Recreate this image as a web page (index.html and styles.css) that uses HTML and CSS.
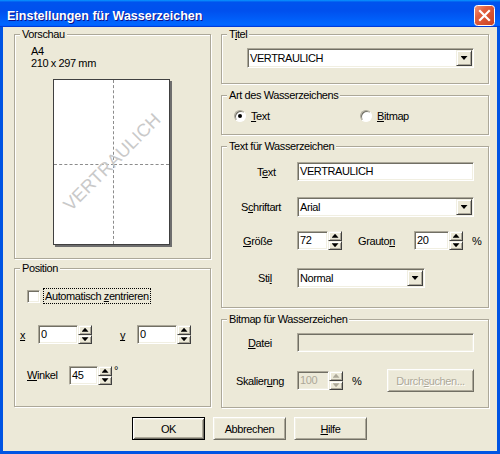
FILE: index.html
```html
<!DOCTYPE html>
<html lang="de">
<head>
    <meta charset="UTF-8">
    <title>Einstellungen für Wasserzeichen</title>
    <link rel="stylesheet" href="styles.css">
</head>
<body>

<div class="window">
    <div class="titlebar">
        <span class="title">Einstellungen für Wasserzeichen</span>
        <svg class="close" width="21" height="21" viewBox="0 0 21 21">
            <defs>
                <linearGradient id="closeFill" x1="0" y1="0" x2="1" y2="1">
                    <stop offset="0" stop-color="#f39a7e"/>
                    <stop offset="0.35" stop-color="#e2603f"/>
                    <stop offset="1" stop-color="#c9401f"/>
                </linearGradient>
            </defs>
            <rect x="0.5" y="0.5" width="20" height="20" rx="3" fill="url(#closeFill)" stroke="#fff"/>
            <path d="M6 6l9 9M15 6l-9 9" stroke="#fff" stroke-width="2.2" stroke-linecap="square"/>
        </svg>
    </div>

    <div class="client">
        <div class="columns">
            <div class="col col-left">
                <div class="group g-preview">
                    <span class="caption">Vorschau</span>
                    <div class="paper-size">A4<br>210 x 297 mm</div>
                    <div class="page">
                        <div class="q q-tl"></div>
                        <div class="q q-tr"></div>
                        <div class="q q-bl"></div>
                        <div class="q"></div>
                        <span class="watermark">VERTRAULICH</span>
                    </div>
                </div>

                <div class="group g-position">
                    <span class="caption">Position</span>
                    <div class="check-row">
                        <span class="checkbox"></span>
                        <span class="focus-label">Automatisch <u>z</u>entrieren</span>
                    </div>
                    <div class="ctl-row xy-row">
                        <span class="lbl-x"><u>x</u></span>
                        <div class="edit w-xy">0</div>
                        <span class="spin"><span class="spin-up"></span><span class="spin-dn"></span></span>
                        <span class="lbl-y"><u>y</u></span>
                        <div class="edit w-xy">0</div>
                        <span class="spin"><span class="spin-up"></span><span class="spin-dn"></span></span>
                    </div>
                    <div class="ctl-row winkel-row">
                        <span class="lbl-winkel"><u>W</u>inkel</span>
                        <div class="edit w-winkel">45</div>
                        <span class="spin"><span class="spin-up"></span><span class="spin-dn"></span></span>
                        <span class="degree">°</span>
                    </div>
                </div>
            </div>

            <div class="col col-right">
                <div class="group g-title">
                    <span class="caption">T<u>i</u>tel</span>
                    <div class="combo w-title">
                        <span class="combo-text">VERTRAULICH</span>
                        <span class="drop"></span>
                    </div>
                </div>

                <div class="group g-kind">
                    <span class="caption">Art des Wasserzeichens</span>
                    <div class="radio-row">
                        <span class="radio-item"><span class="radio checked"></span><span><u>T</u>ext</span></span>
                        <span class="radio-item"><span class="radio"></span><span><u>B</u>itmap</span></span>
                    </div>
                </div>

                <div class="group g-text">
                    <span class="caption">Text für Wasserzeichen</span>
                    <div class="ctl-row row-text">
                        <span class="lbl lbl-text">T<u>e</u>xt</span>
                        <div class="edit w-wide">VERTRAULICH</div>
                    </div>
                    <div class="ctl-row row-font">
                        <span class="lbl lbl-font">S<u>c</u>hriftart</span>
                        <div class="combo w-wide">
                            <span class="combo-text">Arial</span>
                            <span class="drop"></span>
                        </div>
                    </div>
                    <div class="ctl-row row-size">
                        <span class="lbl lbl-size"><u>G</u>röße</span>
                        <div class="edit w-size">72</div>
                        <span class="spin"><span class="spin-up"></span><span class="spin-dn"></span></span>
                        <span class="lbl-gray">Grauto<u>n</u></span>
                        <div class="edit w-gray">20</div>
                        <span class="spin"><span class="spin-up"></span><span class="spin-dn"></span></span>
                        <span class="unit-gray">%</span>
                    </div>
                    <div class="ctl-row row-style">
                        <span class="lbl lbl-style">Sti<u>l</u></span>
                        <div class="combo w-style">
                            <span class="combo-text">Normal</span>
                            <span class="drop"></span>
                        </div>
                    </div>
                </div>

                <div class="group g-bitmap">
                    <span class="caption">Bitmap für Wasserzeichen</span>
                    <div class="ctl-row row-file">
                        <span class="lbl lbl-file"><u>D</u>atei</span>
                        <div class="edit disabled w-wide"></div>
                    </div>
                    <div class="ctl-row row-scale">
                        <span class="lbl lbl-scale">Skalier<u>u</u>ng</span>
                        <div class="edit disabled w-scale">100</div>
                        <span class="spin disabled"><span class="spin-up"></span><span class="spin-dn"></span></span>
                        <span class="unit-scale">%</span>
                        <button class="btn btn-browse" disabled>Durch<u>s</u>uchen...</button>
                    </div>
                </div>
            </div>
        </div>

        <div class="buttons">
            <button class="btn btn-default">OK</button>
            <button class="btn">Abbrechen</button>
            <button class="btn"><u>H</u>ilfe</button>
        </div>
    </div>
</div>

</body>
</html>
```

FILE: styles.css
```css
:root {
    --face: #ece9d8;
    --light: #f1efe2;
    --shadow: #aca899;
    --dark: #716f64;
    --white: #ffffff;
}
* { box-sizing: border-box; }
body {
    margin: 0;
    font-family: "Liberation Sans", Arial, sans-serif;
    font-size: 11px;
    letter-spacing: -0.4px;
    color: #000;
    background: #fff;
}
u { text-decoration-skip-ink: none; text-underline-offset: 1px; }

.window {
    width: 500px;
    height: 454px;
    display: flex;
    flex-direction: column;
    background: #0054e3;
}
.titlebar {
    height: 27px;
    flex: none;
    display: flex;
    align-items: center;
    justify-content: space-between;
    padding: 4px 5px 0 7px;
    background: linear-gradient(180deg, #0997ff, #0053ee 8%, #0050ee 40%, #06f 88%, #06f 93%, #005bff 95%, #003dd7 96%, #003dd7);
}
.title {
    color: #fff;
    font-weight: bold;
    font-size: 12.5px;
    letter-spacing: 0;
    text-shadow: 1px 1px #0f1089;
}
.close { display: block; }

.client {
    flex: 1;
    margin: 0 3px 3px;
    padding: 7px 8px 0 11px;
    background: var(--face);
}
.columns { display: flex; gap: 10px; }
.col { display: flex; flex-direction: column; }
.col-left { width: 197px; gap: 9px; }
.col-right { width: 268px; gap: 11px; }

/* group boxes */
.group {
    position: relative;
    border: 1px solid var(--shadow);
    box-shadow: inset 1px 1px var(--white), 1px 1px var(--white);
}
.caption {
    position: absolute;
    top: -7px;
    left: 5px;
    padding: 0 2px;
    line-height: 13px;
    background: var(--face);
}
.g-preview { height: 225px; padding: 10px 0 0 16px; }
.g-position { height: 139px; }
.g-title { height: 50px; }
.g-kind { height: 40px; }
.g-text { height: 162px; }
.g-bitmap { height: 89px; }

/* preview */
.paper-size { line-height: 12px; }
.page {
    position: relative;
    margin: 10px 0 0 22px;
    width: 117px;
    height: 166px;
    background: var(--white);
    border: 1px solid #404040;
    box-shadow: 2px 2px 0 #6e6e6e;
    display: grid;
    grid-template-columns: 60px 1fr;
    grid-template-rows: 85px 1fr;
}
.q-tl { border-right: 1px dashed #8c8c8c; border-bottom: 1px dashed #8c8c8c; }
.q-tr { border-bottom: 1px dashed #8c8c8c; }
.q-bl { border-right: 1px dashed #8c8c8c; }
.watermark {
    position: absolute;
    left: 50%;
    top: 50%;
    transform: translate(-50%, -50%) rotate(-45deg);
    font-size: 18px;
    line-height: 1;
    letter-spacing: 0.2px;
    color: #c9c9c9;
    white-space: nowrap;
}

/* controls */
.ctl-row { display: flex; align-items: center; }
.edit, .combo {
    height: 19px;
    background: var(--white);
    border: 1px solid;
    border-color: var(--shadow) var(--white) var(--white) var(--shadow);
    box-shadow: inset 1px 1px var(--dark), inset -1px -1px var(--light);
    padding: 0 2px;
    line-height: 17px;
    white-space: nowrap;
}
.edit.disabled { background: var(--face); color: var(--shadow); }
.combo {
    height: 20px;
    display: flex;
    padding: 1px;
    line-height: 16px;
}
.combo-text { flex: 1; padding-left: 1px; }
.drop, .spin-up, .spin-dn {
    display: flex;
    align-items: center;
    justify-content: center;
    background: var(--face);
    border: 1px solid;
    border-color: var(--light) #404040 #404040 var(--light);
    box-shadow: inset 1px 1px var(--white), inset -1px -1px var(--shadow);
}
.drop { width: 16px; }
.drop::before {
    content: "";
    width: 7px;
    height: 4px;
    background: #000;
    clip-path: polygon(0 0, 100% 0, 50% 100%);
}
.spin {
    width: 14px;
    height: 19px;
    display: flex;
    flex-direction: column;
}
.spin-up, .spin-dn { flex: 1; }
.spin-up::before, .spin-dn::before {
    content: "";
    width: 7px;
    height: 4px;
    background: #000;
}
.spin-up::before { clip-path: polygon(50% 0, 100% 100%, 0 100%); }
.spin-dn::before { clip-path: polygon(0 0, 100% 0, 50% 100%); }
.spin.disabled .spin-up::before,
.spin.disabled .spin-dn::before { background: var(--shadow); }

.checkbox {
    width: 13px;
    height: 13px;
    background: var(--white);
    border: 1px solid;
    border-color: var(--shadow) var(--white) var(--white) var(--shadow);
    box-shadow: inset 1px 1px var(--dark), inset -1px -1px var(--light);
}
.radio {
    width: 12px;
    height: 12px;
    border-radius: 50%;
    background: var(--white);
    border: 1px solid;
    border-color: var(--shadow) var(--white) var(--white) var(--shadow);
    box-shadow: inset 1px 1px var(--dark);
    display: flex;
    align-items: center;
    justify-content: center;
}
.radio.checked::before {
    content: "";
    width: 4px;
    height: 4px;
    border-radius: 50%;
    background: #000;
}

/* position group */
.check-row { display: flex; align-items: center; margin: 19px 0 0 12px; }
.focus-label {
    margin-left: 3px;
    height: 16px;
    line-height: 14px;
    padding: 0 1px;
    border: 1px dotted #000;
}
.xy-row { margin: 21px 0 0 5px; }
.lbl-x { width: 18px; }
.lbl-y { width: 17px; margin-left: 28px; }
.w-xy { width: 40px; }
.winkel-row { margin: 22px 0 0 12px; align-items: flex-start; }
.lbl-winkel { width: 42px; line-height: 19px; }
.w-winkel { width: 29px; }
.degree { margin: -2px 0 0 2px; line-height: 12px; }

/* right side */
.w-title { width: 227px; margin: 13px 0 0 25px; }
.radio-row { display: flex; margin: 14px 0 0 12px; }
.radio-item { display: flex; align-items: center; gap: 5px; width: 126px; }

.lbl { width: 75px; }
.lbl-text { padding-left: 35px; }
.lbl-font { padding-left: 19px; }
.lbl-size { padding-left: 21px; }
.lbl-style { padding-left: 36px; }
.lbl-file { padding-left: 26px; }
.lbl-scale { padding-left: 14px; }
.row-text { margin-top: 15px; }
.row-font { margin-top: 16px; }
.row-size { margin-top: 14px; }
.row-style { margin-top: 18px; }
.w-wide { width: 177px; }
.w-size { width: 31px; }
.lbl-gray { width: 56px; margin-left: 16px; }
.w-gray { width: 35px; }
.unit-gray { margin-left: 9px; }
.w-style { width: 128px; }

.row-file { margin-top: 13px; }
.row-scale { margin-top: 17px; }
.w-scale { width: 32px; }
.unit-scale { margin-left: 9px; }

/* push buttons */
.btn {
    width: 73px;
    height: 23px;
    padding: 0;
    font: inherit;
    letter-spacing: inherit;
    color: #000;
    background: var(--face);
    border: 1px solid;
    border-color: var(--white) var(--dark) var(--dark) var(--white);
    box-shadow: inset 1px 1px var(--light), inset -1px -1px var(--shadow);
}
.btn-default {
    border: 1px solid #000;
    box-shadow: inset 1px 1px var(--white), inset -1px -1px var(--dark), inset 2px 2px var(--light), inset -2px -2px var(--shadow);
}
.btn:disabled { color: var(--shadow); text-shadow: 1px 1px var(--white); }
.btn-browse { width: 87px; margin-left: auto; margin-right: 14px; }
.buttons {
    display: flex;
    justify-content: center;
    gap: 8px;
    margin-top: 9px;
    padding-right: 4px;
}
```
